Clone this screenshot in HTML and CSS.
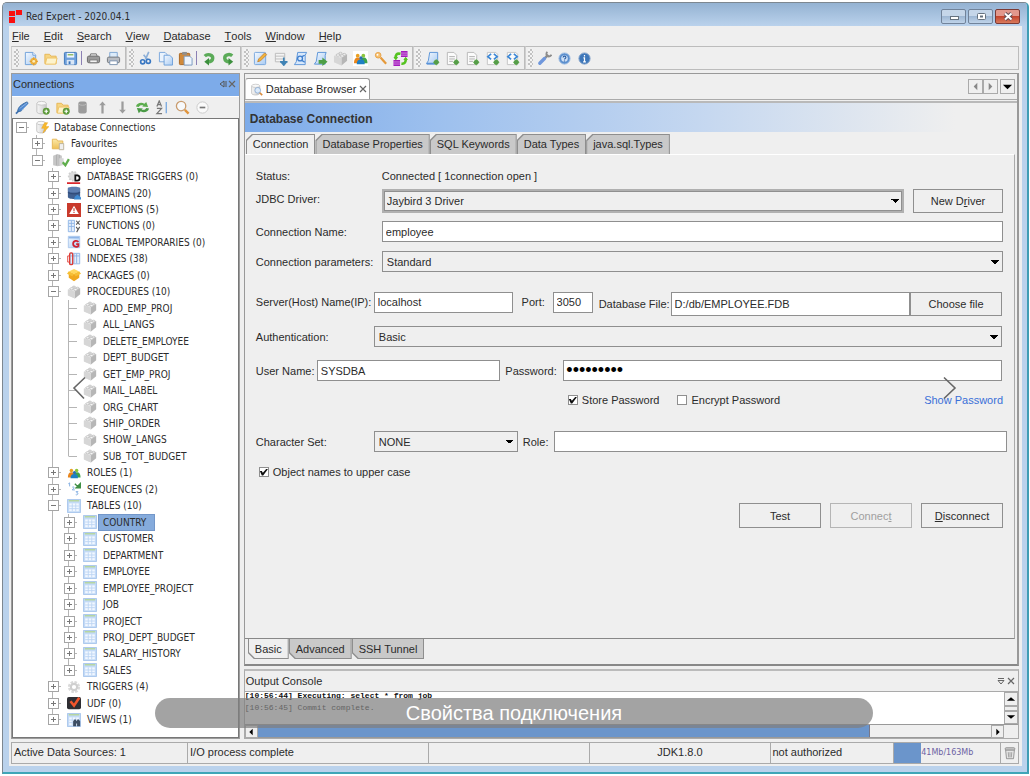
FILE: index.html
```html
<!DOCTYPE html>
<html lang="en">
<head>
<meta charset="utf-8">
<title>Red Expert - 2020.04.1</title>
<link rel="stylesheet" href="styles.css">
</head>
<body>
<svg class="defs" aria-hidden="true">
  <defs>
    <linearGradient id="gb" x1="0" y1="0" x2="1" y2="1"><stop offset="0" stop-color="#f4f9ff"/><stop offset="1" stop-color="#a9cbf2"/></linearGradient>
    <linearGradient id="gy" x1="0" y1="0" x2="0" y2="1"><stop offset="0" stop-color="#fbe9a8"/><stop offset="1" stop-color="#eebf55"/></linearGradient>
    <linearGradient id="gg" x1="0" y1="0" x2="1" y2="0"><stop offset="0" stop-color="#f8f8f8"/><stop offset="1" stop-color="#c8c8c8"/></linearGradient>
  </defs>
  <symbol id="plus" viewBox="0 0 16 16"><circle cx="12" cy="12" r="3.700" fill="#5d9a3a"/><path d="M12 10v4M10 12h4" stroke="#fff" stroke-width="1.300"/></symbol>
  <symbol id="new" viewBox="0 0 16 16"><path d="M2.500 1.500h8l3 3v10h-11z" fill="url(#gb)" stroke="#6d9fda"/><path d="M10.500 1.500v3h3" fill="#fff" stroke="#6d9fda"/><circle cx="11.500" cy="11" r="3.800" fill="#f0b440"/><path d="M11.500 6.500v9M7 11h9" stroke="#e09a2c"/><circle cx="11.500" cy="11" r="1.500" fill="#fff0b8"/></symbol>
  <symbol id="folder" viewBox="0 0 16 16"><path d="M2 3.500h5l1.500 2H14v8H2z" fill="#f6d583" stroke="#e6b654"/><path d="M4 7.500h11l-1.500 6.500H2.500z" fill="#fdf3cc" stroke="#eec265"/></symbol>
  <symbol id="save" viewBox="0 0 16 16"><rect x="1.500" y="1.500" width="13" height="13" rx="1" fill="#6fa0dc" stroke="#3d74b8"/><path d="M4 2h8v5H4z" fill="#eef5fd"/><path d="M5 4h6" stroke="#8cb860" stroke-width="1.500"/><path d="M4 9.500h8v5H4z" fill="#d9e6f5"/><path d="M6 11h2v3H6z" fill="#3d74b8"/></symbol>
  <symbol id="printd" viewBox="0 0 16 16"><path d="M4 6l1-3h6l1 3" fill="#ddd" stroke="#777"/><rect x="1.500" y="5.500" width="13" height="7" rx="1.500" fill="#9a9a9a" stroke="#666"/><path d="M4 9.500h8v3H4z" fill="#f2f2f2" stroke="#777"/></symbol>
  <symbol id="print" viewBox="0 0 16 16"><path d="M4 7V1.500h8V7" fill="#dcebfa" stroke="#7ea5d2"/><rect x="1.500" y="6.500" width="13" height="6" rx="1.500" fill="#b9bcc2" stroke="#70747b"/><path d="M4 10.500h8v4H4z" fill="#fff" stroke="#7c93b0"/></symbol>
  <symbol id="cut" viewBox="0 0 16 16"><path d="M11.500 1L8 9M6 4l4 5" stroke="#8eb0d8" stroke-width="1.800"/><circle cx="5" cy="11.500" r="2.200" fill="none" stroke="#3a78c2" stroke-width="1.800"/><circle cx="11" cy="11" r="2.200" fill="none" stroke="#3a78c2" stroke-width="1.800"/></symbol>
  <symbol id="copy" viewBox="0 0 16 16"><path d="M1.500 1.500h6l2 2v8h-8z" fill="#eaf3fd" stroke="#7ba7dc"/><path d="M6.500 4.500h6l3 3v7.500h-9z" fill="url(#gb)" stroke="#6d9fda"/></symbol>
  <symbol id="paste" viewBox="0 0 16 16"><rect x="1.500" y="2.500" width="11" height="12" rx="1" fill="#d18a3b" stroke="#a9641e"/><path d="M4.500 1h5v3h-5z" fill="#8f8f8f"/><path d="M6.500 5.500h6l2.500 2.500v7h-8.500z" fill="#eef5fd" stroke="#7899c0"/></symbol>
  <symbol id="undo" viewBox="0 0 16 16"><path d="M4 5.500C7 2.500 13 4 12.500 8c-.3 2.500-2.500 3.500-5 3.500" fill="none" stroke="#5bab58" stroke-width="3.600"/><path d="M8.500 7.500v8L3.500 11.500z" fill="#3c8f3d"/></symbol>
  <symbol id="redo" viewBox="0 0 16 16"><path d="M12 5C9 2.500 3.500 4 4 8c.3 2.500 2 3.500 5 3.500" fill="none" stroke="#5bab58" stroke-width="3.600"/><path d="M8 7.500v8l5-4z" fill="#3c8f3d"/></symbol>
  <symbol id="edit" viewBox="0 0 16 16"><rect x="1.500" y="1.500" width="12" height="13" rx="1" fill="url(#gb)" stroke="#75a5de"/><path d="M5 11.500l1-3 6.500-6.500 2 2L8 10.500z" fill="#f2b33b" stroke="#c07a23" stroke-width=".8"/></symbol>
  <symbol id="tbladd" viewBox="0 0 16 16"><path d="M2.500 2.500h10v9h-10zM2.500 5.500h10M2.500 8.500h10" fill="#f4f4f4" stroke="#bbb"/><path d="M11.500 7v8M7.500 11.500h8M9 12l2.500 3 2.500-3" fill="none" stroke="#3f83b5" stroke-width="1.800"/></symbol>
  <symbol id="scr" viewBox="0 0 16 16"><path d="M5 1.500h9.500l-1.500 3v10H1.500l2-3z" fill="#d8e8fb" stroke="#5a93d8"/><circle cx="7.500" cy="8" r="2.600" fill="none" stroke="#3f7fce" stroke-width="1.400"/><path d="M9.500 6l3-1.500M9.500 10l3 2" stroke="#3f7fce" stroke-width="1.300" fill="none"/></symbol>
  <symbol id="scrrun" viewBox="0 0 16 16"><path d="M5 1.500h9l-1 3v9.500H1.500l2-3z" fill="url(#gb)" stroke="#5a93d8"/><path d="M6 9.500h4V7l5.500 4.500L10 16v-2.500H6z" fill="#4d9f45"/></symbol>
  <symbol id="cube" viewBox="0 0 16 16"><path d="M1 5l6-4 8 2.500v7L9 15.500 1 12z" fill="#e6e6e6"/><path d="M9 7.500l6-4v7L9 15.500z" fill="#b6b6b6"/><path d="M1 5l8 2.500v8L1 12z" fill="#d6d6d6"/><g fill="#fafafa" stroke="#b5b5b5" stroke-width=".8"><ellipse cx="5.300" cy="4.300" rx="2" ry="1.200"/><ellipse cx="9.800" cy="5.300" rx="2" ry="1.200"/><ellipse cx="8" cy="2.300" rx="1.700" ry="1"/><ellipse cx="12" cy="3.500" rx="1.700" ry="1"/></g></symbol>
  <symbol id="roles" viewBox="0 0 16 16"><circle cx="5" cy="5" r="2" fill="#e9a022"/><path d="M1 13c0-4 1.500-6 4-6s4 2 4 6z" fill="#e9861c"/><circle cx="11" cy="5" r="2" fill="#8cc63c"/><path d="M8 13c0-4 1-6 3.500-6s4 2 4 6z" fill="#3fa34a"/><circle cx="8.500" cy="7.500" r="1.800" fill="#2b6fb3"/><path d="M4 14c0-3.500 1.500-5 4.500-5s4 1.500 4 5z" fill="#1d7fc4"/></symbol>
  <symbol id="key" viewBox="0 0 16 16"><path d="M8 7l6 6.500" stroke="#e59a3b" stroke-width="2.400"/><circle cx="5.500" cy="4.500" r="3" fill="#f6c070" stroke="#e8a34a"/><circle cx="4.800" cy="4" r="1" fill="#fff"/></symbol>
  <symbol id="sync" viewBox="0 0 16 16"><path d="M8.500 0h7v6.500h-7zM.5 9.500h7V16h-7z" fill="#a31bbd"/><path d="M8.500 2.200h7M8.500 4.400h7M.5 11.700h7M.5 13.900h7" stroke="#f3d4f7" stroke-width=".6"/><path d="M8 3C4 2 2.500 4 3 8M9 13.500c3.500.5 5-2 4.500-5.500" fill="none" stroke="#55c321" stroke-width="2.800"/><path d="M.5 6.500h5L3 10zM11 9.500h5L13.500 6z" fill="#55c321"/></symbol>
  <symbol id="dot" viewBox="0 0 16 16"><path d="M12 8.500l3.500 3.500-3.500 3.500L8.500 12z" fill="#6cb35b"/><circle cx="12" cy="12" r="2.500" fill="#569d49"/></symbol>
  <symbol id="blue" viewBox="0 0 16 16"><path d="M5 1.500h8.500v12H1.500l2-3z" fill="url(#gb)" stroke="#5a93d8"/><path d="M2 13.500h9" stroke="#5a93d8" stroke-width="2"/><use href="#dot"/></symbol>
  <symbol id="page" viewBox="0 0 16 16"><path d="M2.500 1.500h7l3 3v10h-10z" fill="#fbfbfb" stroke="#b8b8b8"/><path d="M4.500 6h6M4.500 8.500h6M4.500 11h4" stroke="#ababab"/><use href="#dot"/></symbol>
  <symbol id="code" viewBox="0 0 16 16"><path d="M2.500 1.500h9l2 2v11h-11z" fill="#fbfbfb" stroke="#c3c3c3"/><path d="M6.500 3L3 6l3.500 3M9.500 3L13 6 9.500 9" stroke="#3d88d6" stroke-width="1.800" fill="none"/><use href="#dot"/></symbol>
  <symbol id="wrench" viewBox="0 0 16 16"><path d="M8 8l4-4" stroke="#8c8c8c" stroke-width="2.600"/><path d="M11 .8C9.500 2.500 10 5 11 5.500s3 .5 4.500-1.500" stroke="#8c8c8c" fill="none" stroke-width="2"/><path d="M3 13L8 8" stroke="#6f97dc" stroke-width="3.600" stroke-linecap="round"/></symbol>
  <symbol id="help" viewBox="0 0 16 16"><circle cx="8" cy="8" r="6" fill="#5b8fce" stroke="#a8c2e4"/><circle cx="8" cy="8" r="3.500" fill="#cfe0f5"/><path d="M6.500 7c0-2 3-2 3 0 0 1-1.500 1-1.500 2M8 10v1.200" stroke="#2c5fa4" fill="none" stroke-width="1.200"/></symbol>
  <symbol id="info" viewBox="0 0 16 16"><circle cx="8" cy="8" r="6" fill="#3e77ba" stroke="#8aa6cc"/><path d="M8 4.200v1.600M6.800 7.300H8v4M6.500 11.500h3" stroke="#fff" fill="none" stroke-width="1.300"/></symbol>
  <symbol id="plug" viewBox="0 0 16 16"><path d="M1 14.500l3-3" stroke="#3d6fae" stroke-width="1.800"/><path d="M3 12C3 8 6 5 13 2c2 2-1 4-3 6s-3 5-7 4z" fill="#4d86cf" stroke="#35689f"/><path d="M5 9l8-6M7 11l7-7" stroke="#8fb6e6" stroke-width="1"/></symbol>
  <symbol id="db" viewBox="0 0 16 16"><path d="M2 3.500v9c0 3 10 3 10 0v-9" fill="url(#gg)" stroke="#c0c0c0"/><ellipse cx="7" cy="3.500" rx="5" ry="2" fill="#f8f8f8" stroke="#c6c6c6"/></symbol>
  <symbol id="dbadd" viewBox="0 0 16 16"><use href="#db"/><use href="#plus"/></symbol>
  <symbol id="foladd" viewBox="0 0 16 16"><use href="#folder"/><use href="#plus"/></symbol>
  <symbol id="dbg" viewBox="0 0 16 16"><rect x="3.500" y="1.500" width="9" height="13" rx="2.500" fill="#9c9c9c"/><path d="M4 4.500c2 1.500 6 1.500 8 0" stroke="#bcbcbc" fill="none"/></symbol>
  <symbol id="up" viewBox="0 0 16 16"><path d="M8 1.500l3.500 4H9.200v9H6.800v-9H4.500z" fill="#9c9c9c"/></symbol>
  <symbol id="down" viewBox="0 0 16 16"><path d="M8 14.500l3.500-4H9.200v-9H6.800v9H4.500z" fill="#9c9c9c"/></symbol>
  <symbol id="refresh" viewBox="0 0 16 16"><path d="M1 7c1-4 6-5 9-3l2-2 2 5.500-6.500-.5L9 6C7 5 5 5.500 4 7.500z" fill="#5cad4e"/><path d="M15 9c-1 4-6 5-9 3l-2 2-2-5.500 6.500.5L7 10c2 1 4 .5 5-1.500z" fill="#4b9b47"/></symbol>
  <symbol id="sort" viewBox="0 0 16 16"><path d="M2 7l2.500-6L7 7M3 5h3M2 9h5l-5 5.500h5.500" fill="none" stroke="#777" stroke-width="1.300"/><path d="M12 2v12" stroke="#6fa3df" fill="none" stroke-width="1.300"/></symbol>
  <symbol id="zoom" viewBox="0 0 16 16"><circle cx="6.500" cy="6.500" r="5" fill="#f7f9fb" stroke="#c99c6e" stroke-width="1.400"/><path d="M10.500 10.500l4 4" stroke="#e0943c" stroke-width="2.600"/></symbol>
  <symbol id="minus" viewBox="0 0 16 16"><circle cx="8" cy="8" r="6" fill="#fafafa" stroke="#c9c9c9"/><path d="M5 8h6" stroke="#777" stroke-width="1.800"/></symbol>
  <symbol id="dbfind" viewBox="0 0 16 16"><use href="#db"/><circle cx="9.500" cy="9" r="3.500" fill="#dcebfb" stroke="#86a8d0"/><path d="M12 12l3 3" stroke="#d98b3e" stroke-width="2"/></symbol>
  <symbol id="dbcon" viewBox="0 0 16 16"><use href="#db"/><path d="M11 3L7.500 9.500H11L9 15l7-7.500h-4L14.500 3z" fill="#f8b92c" stroke="#e7a01c" stroke-width=".5"/></symbol>
  <symbol id="fav" viewBox="0 0 16 16"><path d="M1.500 2.500h5l1 2h6v9h-12z" fill="url(#gy)" stroke="#e3b450"/><path d="M9.500 7.500h5v7h-5z" fill="#f0f0f0" stroke="#b9b09a"/></symbol>
  <symbol id="conn" viewBox="0 0 20 16"><path d="M1 3l5-2 5 2v11l-5 1-5-1z" fill="#c6c6c6"/><path d="M5 2v12M8 2v12" stroke="#aaa"/><path d="M8 6h5v8H8z" fill="#d6d6d6"/><path d="M12 10.500l3 3.500 4-7" stroke="#5fae4c" stroke-width="2.600" fill="none"/></symbol>
  <symbol id="dbtrig" viewBox="0 0 16 16"><circle cx="7" cy="7" r="5" fill="#dcdcdc" stroke="#cfcfcf" stroke-dasharray="2 1.500" stroke-width="2"/><path d="M0 15h15" stroke="#d8262c" stroke-width="2"/><path d="M9.500 6h2c4 0 4 6 0 6h-2z" fill="#fff" stroke="#111" stroke-width="2"/></symbol>
  <symbol id="domain" viewBox="0 0 16 16"><path d="M1 2v10.500c0 3 14 3 14 0V2z" fill="#3f5f90"/><path d="M1 3c0-3 14-3 14 0v3c-3 2-11 2-14 0z" fill="#5e7fb2"/><path d="M1 7.500c3 2 11 2 14 0" stroke="#2b4470" fill="none"/><path d="M9 12l3-2 4 3v2.500H8z" fill="#3f8ad2"/></symbol>
  <symbol id="exc" viewBox="0 0 16 16"><path d="M0 0h16v16H0z" fill="#c93a2c"/><path d="M8 3l5.500 9.500h-11z" fill="#fff"/><path d="M8 6v3.500M8 10.300v1.200" stroke="#c93a2c" stroke-width="1.300"/></symbol>
  <symbol id="func" viewBox="0 0 16 16"><path d="M1.500 1.500h7v13h-7zM5 2v12M2 5h6M2 8.500h6" fill="#e3eefb" stroke="#8bb2e5"/><path d="M10.500 2l4 4.500M14.500 2l-4 4.500M10.500 9l2 3M14.500 9l-3.500 6" stroke="#555" stroke-width="1.200"/></symbol>
  <symbol id="glob" viewBox="0 0 16 16"><path d="M1.500 1.500h13v13h-13z" fill="url(#gb)" stroke="#a8c5ea"/><path d="M2 3h12" stroke="#8fb6e8" stroke-width="2"/><path d="M13 8c-1-2-6-2-6 2s5 4 6 2.500V10.500h-2.500" fill="none" stroke="#d02030" stroke-width="2"/></symbol>
  <symbol id="index" viewBox="0 0 16 16"><path d="M3.500 1.500h11v12h-11zM8 2v11M11 2v11M4 4.500h10" fill="#e3eefb" stroke="#8bb2e5"/><rect x="3" y="1" width="3.500" height="13.500" rx="1.500" fill="none" stroke="#e03c35" stroke-width="1.500"/><path d="M3 4.500H.8v7H3" stroke="#e03c35" fill="none"/></symbol>
  <symbol id="pack" viewBox="0 0 16 16"><path d="M8 6.500l6-2.500v7L8 15 2 11V4z" fill="#f0a81f"/><path d="M8 1l6 3-6 3-6-3z" fill="#ffd75e"/><path d="M0 6.500L2 4l6 3-2 2.500zM16 6.500L14 4 8 7l2 2.500z" fill="#f6bf35"/></symbol>
  <symbol id="seq" viewBox="0 0 16 16"><path d="M1.500 2L3 1v4M6 6c2-1.500 3 .5 0 3h3M10 11h2.500l-1.500 1.500c3 0 1 3-1 2" stroke="#77a7df" fill="none"/><path d="M9 2l3 3M10.500 6.500h5v-5z" fill="#3f8f45" stroke="#3f8f45" stroke-width="1.600"/></symbol>
  <symbol id="tbl" viewBox="0 0 16 16"><path d="M.5.500h15v15H.5z" fill="#c3daf6" stroke="#a3c3ec"/><path d="M2 2h12" stroke="#b6d69c" stroke-width="1.600"/><path d="M2.500 5h11v9h-11z" fill="#f2f8ff"/><path d="M6 5v9M10 5v9M2.500 8h11M2.500 11h11" stroke="#bcd5f4"/></symbol>
  <symbol id="gear" viewBox="0 0 16 16"><circle cx="8" cy="8" r="5" fill="none" stroke="#dadada" stroke-width="4" stroke-dasharray="2.600 1.300"/><circle cx="8" cy="8" r="3.600" fill="none" stroke="#cfcfcf" stroke-width="2.400"/></symbol>
  <symbol id="udf" viewBox="0 0 16 16"><rect y="1" width="16" height="14" rx="2" fill="#2e2e33"/><path d="M4 6l4 5 6-9" stroke="#f2552c" stroke-width="3" fill="none"/></symbol>
  <symbol id="view" viewBox="0 0 16 16"><use href="#tbl"/><path d="M7 15V9.500l1.500-2h1.500l1 2 1-2h1.500l1.500 2V15h-3.500v-3h-1v3z" fill="#3c4d63"/></symbol>
  <symbol id="trash" viewBox="0 0 16 16"><path d="M3 4.500h10l-1 10H4z" fill="#e4e4e4" stroke="#8c8c8c"/><rect x="2.500" y="2" width="11" height="2.500" rx="1" fill="#ccc" stroke="#8c8c8c"/><path d="M6 7l.5 6M8 7v6M10 7l-.5 6" stroke="#9a9a9a"/></symbol>
  <symbol id="cross" viewBox="0 0 8 8"><path d="M1 1l6 6M7 1L1 7" stroke="#666" stroke-width="1.200"/></symbol>
</svg>

<div class="window">
  <header class="titlebar">
    <svg class="logo" viewBox="0 0 13 13"><path d="M0 1h6v5H0zM7 0h6v5H7zM0 7h6v6H0z" fill="#fa1010"/></svg>
    <h1>Red Expert - 2020.04.1</h1>
    <button class="wb" aria-label="Minimize"><svg viewBox="0 0 24 13"><rect x="8.500" y="6.500" width="8" height="3" fill="#fff" stroke="#66727f"/></svg></button>
    <button class="wb" aria-label="Maximize"><svg viewBox="0 0 24 13"><rect x="8.500" y="3.500" width="8" height="6" rx="1" fill="#fff" stroke="#66727f"/><rect x="11" y="5.500" width="3" height="2" fill="#66727f"/></svg></button>
    <button class="wb close" aria-label="Close"><svg viewBox="0 0 24 13"><path d="M9 3.500l6.500 6M15.500 3.500l-6.500 6" stroke="#5d4d55" stroke-width="3.800"/><path d="M9 3.500l6.500 6M15.500 3.500l-6.500 6" stroke="#fff" stroke-width="2"/></svg></button>
  </header>

  <div class="client">
    <nav class="menu">
      <button><u>F</u>ile</button><button><u>E</u>dit</button><button><u>S</u>earch</button><button><u>V</u>iew</button><button><u>D</u>atabase</button><button><u>T</u>ools</button><button><u>W</u>indow</button><button><u>H</u>elp</button>
    </nav>

    <div class="toolbars">
      <div class="bar"><i class="grip"></i>
        <button aria-label="New"><svg><use href="#new"/></svg></button><button aria-label="Open"><svg><use href="#folder"/></svg></button><button aria-label="Save"><svg><use href="#save"/></svg></button><i class="sep"></i><button aria-label="Print"><svg><use href="#printd"/></svg></button><button aria-label="Print preview"><svg><use href="#print"/></svg></button>
      </div>
      <div class="bar"><i class="grip"></i>
        <button aria-label="Cut"><svg><use href="#cut"/></svg></button><button aria-label="Copy"><svg><use href="#copy"/></svg></button><button aria-label="Paste"><svg><use href="#paste"/></svg></button><i class="sep"></i><button aria-label="Undo"><svg><use href="#undo"/></svg></button><button aria-label="Redo"><svg><use href="#redo"/></svg></button>
      </div>
      <div class="bar"><i class="grip"></i>
        <button aria-label="Query editor"><svg><use href="#edit"/></svg></button><button aria-label="Create table"><svg><use href="#tbladd"/></svg></button><button aria-label="Script"><svg><use href="#scr"/></svg></button><button aria-label="Run script"><svg><use href="#scrrun"/></svg></button><button aria-label="Procedure"><svg><use href="#cube"/></svg></button><button class="lit" aria-label="Roles"><svg><use href="#roles"/></svg></button><button aria-label="Grants"><svg><use href="#key"/></svg></button><button aria-label="Compare"><svg><use href="#sync"/></svg></button>
      </div>
      <div class="bar"><i class="grip"></i>
        <button aria-label="Export SQL"><svg><use href="#blue"/></svg></button><button aria-label="Export text"><svg><use href="#page"/></svg></button><button aria-label="Import text"><svg><use href="#page"/></svg></button><button aria-label="Export XML"><svg><use href="#code"/></svg></button><button aria-label="Import XML"><svg><use href="#code"/></svg></button>
      </div>
      <div class="bar rest"><i class="grip"></i>
        <button aria-label="Preferences"><svg><use href="#wrench"/></svg></button><button aria-label="Help"><svg><use href="#help"/></svg></button><button aria-label="About"><svg><use href="#info"/></svg></button>
      </div>
    </div>

    <div class="work">
      <aside class="side">
        <div class="sidehead"><h2>Connections</h2><button aria-label="Hide"><svg viewBox="0 0 8 8"><path d="M5 1L1 4l4 3zM7 1v6" fill="none" stroke="#555"/></svg></button><button aria-label="Close panel"><svg viewBox="0 0 8 8"><use href="#cross"/></svg></button></div>
        <div class="sidebar">
          <button aria-label="Connect"><svg><use href="#plug"/></svg></button><button aria-label="Add connection"><svg><use href="#dbadd"/></svg></button><button aria-label="Add folder"><svg><use href="#foladd"/></svg></button><button aria-label="Delete"><svg><use href="#dbg"/></svg></button><button aria-label="Move up"><svg><use href="#up"/></svg></button><button aria-label="Move down"><svg><use href="#down"/></svg></button><button aria-label="Refresh"><svg><use href="#refresh"/></svg></button><button aria-label="Sort"><svg><use href="#sort"/></svg></button><button aria-label="Find"><svg><use href="#zoom"/></svg></button><button aria-label="Collapse"><svg><use href="#minus"/></svg></button>
        </div>
        <ul class="tree">
          <li><i class="x m root"></i><svg><use href="#dbcon"/></svg><span>Database Connections</span></li>
          <li><i></i><i class="x p"></i><svg><use href="#fav"/></svg><span>Favourites</span></li>
          <li><i></i><i class="x m end"></i><svg class="wide"><use href="#conn"/></svg><span>employee</span></li>
          <li><i></i><i></i><i class="x p"></i><svg><use href="#dbtrig"/></svg><span>DATABASE TRIGGERS (0)</span></li>
          <li><i></i><i></i><i class="x p"></i><svg><use href="#domain"/></svg><span>DOMAINS (20)</span></li>
          <li><i></i><i></i><i class="x p"></i><svg><use href="#exc"/></svg><span>EXCEPTIONS (5)</span></li>
          <li><i></i><i></i><i class="x p"></i><svg><use href="#func"/></svg><span>FUNCTIONS (0)</span></li>
          <li><i></i><i></i><i class="x p"></i><svg><use href="#glob"/></svg><span>GLOBAL TEMPORARIES (0)</span></li>
          <li><i></i><i></i><i class="x p"></i><svg><use href="#index"/></svg><span>INDEXES (38)</span></li>
          <li><i></i><i></i><i class="x p"></i><svg><use href="#pack"/></svg><span>PACKAGES (0)</span></li>
          <li><i></i><i></i><i class="x m"></i><svg><use href="#cube"/></svg><span>PROCEDURES (10)</span></li>
          <li><i></i><i></i><i class="v"></i><i class="t"></i><svg><use href="#cube"/></svg><span>ADD_EMP_PROJ</span></li>
          <li><i></i><i></i><i class="v"></i><i class="t"></i><svg><use href="#cube"/></svg><span>ALL_LANGS</span></li>
          <li><i></i><i></i><i class="v"></i><i class="t"></i><svg><use href="#cube"/></svg><span>DELETE_EMPLOYEE</span></li>
          <li><i></i><i></i><i class="v"></i><i class="t"></i><svg><use href="#cube"/></svg><span>DEPT_BUDGET</span></li>
          <li><i></i><i></i><i class="v"></i><i class="t"></i><svg><use href="#cube"/></svg><span>GET_EMP_PROJ</span></li>
          <li><i></i><i></i><i class="v"></i><i class="t"></i><svg><use href="#cube"/></svg><span>MAIL_LABEL</span></li>
          <li><i></i><i></i><i class="v"></i><i class="t"></i><svg><use href="#cube"/></svg><span>ORG_CHART</span></li>
          <li><i></i><i></i><i class="v"></i><i class="t"></i><svg><use href="#cube"/></svg><span>SHIP_ORDER</span></li>
          <li><i></i><i></i><i class="v"></i><i class="t"></i><svg><use href="#cube"/></svg><span>SHOW_LANGS</span></li>
          <li><i></i><i></i><i class="v"></i><i class="t end"></i><svg><use href="#cube"/></svg><span>SUB_TOT_BUDGET</span></li>
          <li><i></i><i></i><i class="x p"></i><svg><use href="#roles"/></svg><span>ROLES (1)</span></li>
          <li><i></i><i></i><i class="x p"></i><svg><use href="#seq"/></svg><span>SEQUENCES (2)</span></li>
          <li><i></i><i></i><i class="x m"></i><svg><use href="#tbl"/></svg><span>TABLES (10)</span></li>
          <li><i></i><i></i><i class="v"></i><i class="x p"></i><svg><use href="#tbl"/></svg><span class="on">COUNTRY</span></li>
          <li><i></i><i></i><i class="v"></i><i class="x p"></i><svg><use href="#tbl"/></svg><span>CUSTOMER</span></li>
          <li><i></i><i></i><i class="v"></i><i class="x p"></i><svg><use href="#tbl"/></svg><span>DEPARTMENT</span></li>
          <li><i></i><i></i><i class="v"></i><i class="x p"></i><svg><use href="#tbl"/></svg><span>EMPLOYEE</span></li>
          <li><i></i><i></i><i class="v"></i><i class="x p"></i><svg><use href="#tbl"/></svg><span>EMPLOYEE_PROJECT</span></li>
          <li><i></i><i></i><i class="v"></i><i class="x p"></i><svg><use href="#tbl"/></svg><span>JOB</span></li>
          <li><i></i><i></i><i class="v"></i><i class="x p"></i><svg><use href="#tbl"/></svg><span>PROJECT</span></li>
          <li><i></i><i></i><i class="v"></i><i class="x p"></i><svg><use href="#tbl"/></svg><span>PROJ_DEPT_BUDGET</span></li>
          <li><i></i><i></i><i class="v"></i><i class="x p"></i><svg><use href="#tbl"/></svg><span>SALARY_HISTORY</span></li>
          <li><i></i><i></i><i class="v"></i><i class="x p end"></i><svg><use href="#tbl"/></svg><span>SALES</span></li>
          <li><i></i><i></i><i class="x p"></i><svg><use href="#gear"/></svg><span>TRIGGERS (4)</span></li>
          <li><i></i><i></i><i class="x p"></i><svg><use href="#udf"/></svg><span>UDF (0)</span></li>
          <li><i></i><i></i><i class="x p end"></i><svg><use href="#view"/></svg><span>VIEWS (1)</span></li>
        </ul>
      </aside>

      <main class="main">
        <section class="browser">
          <div class="strip">
            <div class="doctab"><svg><use href="#dbfind"/></svg><span>Database Browser</span><button aria-label="Close tab"><svg viewBox="0 0 8 8"><use href="#cross"/></svg></button></div>
            <div class="navs">
              <button aria-label="Previous tab"><svg viewBox="0 0 12 12"><path d="M8 2v8L4 6z" fill="#888"/></svg></button><button aria-label="Next tab"><svg viewBox="0 0 12 12"><path d="M4 2v8l4-4z" fill="#888"/></svg></button><button class="list" aria-label="Tab list"><svg viewBox="0 0 12 12"><path d="M1 4h10L6 9z"/></svg></button>
            </div>
          </div>
          <h2 class="banner">Database Connection</h2>
          <div class="tabs">
            <button class="tab on">Connection</button><button class="tab">Database Properties</button><button class="tab">SQL Keywords</button><button class="tab">Data Types</button><button class="tab">java.sql.Types</button>
          </div>
          <form class="form">
            <div class="row status"><span class="lab">Status:</span><span>Connected [ 1connection open ]</span></div>
            <div class="row driver"><label class="lab" for="drv">JDBC Driver:</label><select id="drv" class="grow tall focus"><option>Jaybird 3 Driver</option></select><button type="button" class="btn gap">New D<u>r</u>iver</button></div>
            <div class="row"><label class="lab" for="nm">Connection Name:</label><input id="nm" class="grow" value="employee"></div>
            <div class="row"><label class="lab" for="par">Connection parameters:</label><select id="par" class="grow"><option>Standard</option></select></div>
            <div class="row server in"><label class="lab2" for="host">Server(Host) Name(IP):</label><input id="host" class="host" value="localhost"><label class="portl" for="port">Port:</label><input id="port" class="port" value="3050"><label class="dbl" for="file">Database File:</label><input id="file" class="grow tall" value="D:/db/EMPLOYEE.FDB"><button type="button" class="btn file">Choose file</button></div>
            <div class="row in"><label class="lab2" for="auth">Authentication:</label><select id="auth" class="grow"><option>Basic</option></select></div>
            <div class="row user in"><label class="ul" for="usr">User Name:</label><input id="usr" class="usr" value="SYSDBA"><label class="pl" for="pwd">Password:</label><input id="pwd" class="grow pwd" type="password" value="masterkey"></div>
            <div class="row opts"><label><input type="checkbox" checked>Store Password</label><label><input type="checkbox">Encrypt Password</label><a href="#">Show Password</a></div>
            <div class="row charset"><label class="lab2" for="cs">Character Set:</label><select id="cs" class="cs"><option>NONE</option></select><label class="rl" for="role">Role:</label><input id="role" class="grow"></div>
            <div class="row upper"><label><input type="checkbox" checked>Object names to upper case</label></div>
            <div class="row acts"><button type="button" class="btn">Test</button><button type="button" class="btn" disabled>Connec<u>t</u></button><button type="button" class="btn"><u>D</u>isconnect</button></div>
          </form>
          <div class="tabs low">
            <button class="tab on">Basic</button><button class="tab">Advanced</button><button class="tab">SSH Tunnel</button>
          </div>
        </section>

        <section class="console">
          <div class="chead"><h2>Output Console</h2><button aria-label="Minimize console"><svg viewBox="0 0 8 8"><path d="M1 1.500h6M1 3.500h6L4 7z" fill="none" stroke="#666"/></svg></button><button aria-label="Close console"><svg viewBox="0 0 8 8"><use href="#cross"/></svg></button></div>
          <div class="cbody">
            <pre><b>[10:56:44] Executing: select * from job</b>
[10:56:45] Commit complete.</pre>
            <div class="vs"><button aria-label="Scroll up"><svg viewBox="0 0 12 12"><path d="M1 8h10L6 4z"/></svg></button><i></i><button aria-label="Scroll down"><svg viewBox="0 0 12 12"><path d="M1 4h10L6 8z"/></svg></button></div>
          </div>
          <div class="hs"><button aria-label="Scroll left"><svg viewBox="0 0 12 12"><path d="M8 2v8L4 6z"/></svg></button><div class="track"><i></i></div><button aria-label="Scroll right"><svg viewBox="0 0 12 12"><path d="M4 2v8l4-4z"/></svg></button></div>
        </section>
      </main>
    </div>

    <footer class="statusbar"><span class="s1">Active Data Sources: 1</span><span class="s2">I/O process complete</span><span class="s3"></span><span class="s4">JDK1.8.0</span><span class="s5">not authorized</span><span class="s6">41Mb/163Mb</span><button aria-label="Collect garbage"><svg><use href="#trash"/></svg></button></footer>
  </div>
</div>

<button class="arrow prev" aria-label="Previous"><svg viewBox="0 0 14 24"><path d="M13 1.500L2 12l10 10.500" fill="none" stroke="#666" stroke-width="1.600"/></svg></button>
<button class="arrow next" aria-label="Next"><svg viewBox="0 0 14 24"><path d="M1 1.500L12 12 1 22.500" fill="none" stroke="#666" stroke-width="1.600"/></svg></button>
<p class="caption" lang="ru">Свойства подключения</p>
</body>
</html>
```

FILE: styles.css
```css
* { box-sizing: border-box; }
body {
  margin: 0;
  height: 100vh;
  padding: 2px 1px 2px 2px;
  position: relative;
  overflow: hidden;
  background: #fff;
  color: #2b2b2b;
  font: 11px/14px "Liberation Sans", Arial, sans-serif;
}
.defs { position: absolute; width: 0; height: 0; }
button, input, select { font: inherit; color: inherit; margin: 0; border-radius: 0; }
button { border: 0; padding: 0; background: none; display: flex; align-items: center; justify-content: center; }
h1, h2, p, pre, ul { margin: 0; padding: 0; font-size: inherit; font-weight: normal; }
svg { display: block; flex: none; }
i { display: block; flex: none; }

.window {
  height: 100%;
  display: flex;
  flex-direction: column;
  padding: 0 5px 6px 6px;
  border: 1px solid #7d8790;
  border-right: 2px solid #3f9db4;
  border-bottom: 2px solid #3fa6b8;
  border-radius: 5px 5px 0 0;
  background: #bad2ec;
}
.titlebar {
  display: flex;
  align-items: center;
  gap: 2px;
  height: 23px;
  margin: 0 -5px 0 -6px;
  padding: 4px 7px 0 6px;
  border-radius: 4px 4px 0 0;
  background: linear-gradient(#94b2d2, #bad2ec);
}
.logo { width: 13px; height: 13px; }
.titlebar h1 { flex: 1; padding-left: 2px; font: 10px/14px "DejaVu Sans Condensed", "DejaVu Sans", sans-serif; }
.wb { width: 25px; height: 15px; border: 1px solid #71839a; border-radius: 2px; background: linear-gradient(#c5d6e9 45%, #9fb8d4 50%, #bfd3e9); }
.wb svg { width: 24px; height: 13px; }
.wb.close { background: linear-gradient(#e2988c 45%, #c4452e 50%, #d97a5c); border-color: #7b3a35; }

.client { flex: 1; min-height: 0; display: flex; flex-direction: column; background: #efefef; padding: 0 3px 2px 2px; }
.menu { display: flex; gap: 14px; height: 20px; padding-left: 1px; }
.toolbars { display: flex; height: 24px; }
.bar { display: flex; align-items: center; border: 1px solid #bcbcbc; border-left-color: #cfcfcf; padding-right: 2px; }
.bar.rest { flex: 1; }
.bar button { width: 20px; height: 20px; }
.bar svg { width: 15px; height: 15px; }
.bar .lit svg { background: #fff; }
.grip { width: 5px; height: 18px; margin: 0 1px 0 2px; background: repeating-conic-gradient(#c2c2c2 0 25%, #f4f4f4 0 50%) 0 0/4px 4px; }
.sep { width: 1px; height: 14px; margin: 0 1px; background: #8b80b4; }

.work { flex: 1; min-height: 0; display: flex; gap: 4px; padding: 3px 0; }
.side { width: 22.700%; flex: none; display: flex; flex-direction: column; border: 1px solid #9c9c9c; }
.sidehead { display: flex; align-items: center; gap: 1px; height: 22px; padding: 0 3px 2px 1px; background: #7dabe9; }
.sidehead h2 { flex: 1; }
.sidehead svg, .chead svg, .doctab button svg { width: 8px; height: 8px; }
.sidebar { display: flex; align-items: center; height: 22px; border-top: 1px solid #fff; }
.sidebar button { width: 20px; height: 20px; }
.sidebar svg { width: 15px; height: 15px; }

.tree {
  flex: 1;
  min-height: 0;
  display: grid;
  grid-auto-rows: 1fr;
  padding: 0 0 9px 0;
  border: 1px solid #777;
  background: #fff;
  list-style: none;
  font: 10px/13px "DejaVu Sans Condensed", "DejaVu Sans", sans-serif;
}
.tree li { display: flex; align-items: center; min-height: 0; white-space: pre; }
.tree i { width: 16px; height: 100%; }
.tree i.v, .tree i.t, .tree i.x {
  background:
    linear-gradient(#b5b5b5, #b5b5b5) 7px 0/1px 100% no-repeat,
    linear-gradient(#b5b5b5, #b5b5b5) 100% 50%/0 0 no-repeat;
}
.tree i.t, .tree i.x { background-size: 1px 100%, 8px 1px; }
.tree i.end { background-size: 1px 50%, 8px 1px; }
.tree i.root { background-size: 0 0, 8px 1px; }
.tree i.x { display: flex; align-items: center; padding-left: 3px; }
.tree i.x::before {
  content: "";
  width: 9px;
  height: 9px;
  border: 1px solid #a5a5a5;
  background:
    linear-gradient(#777, #777) 50% 50%/5px 1px no-repeat,
    linear-gradient(#777, #777) 50% 50%/0 0 no-repeat,
    #fff;
}
.tree i.p::before { background-size: 5px 1px, 1px 5px, auto; }
.tree svg { width: 14px; height: 14px; margin: 0 2px 0 6px; }
.tree svg.wide { width: 20px; }
.tree span { padding: 1px 4px; }
.tree li:first-child span { padding-left: 3px; }
.tree .on { background: #85abdc; outline: 1px solid #7397c9; padding: 1px 8px 1px 4px; }

.main { flex: 1; min-width: 0; display: flex; flex-direction: column; gap: 3px; }
.browser { flex: 1; min-height: 0; display: flex; flex-direction: column; border: 1px solid #999; border-right: 2px solid #999; border-bottom: 2px solid #888; }
.strip { display: flex; justify-content: space-between; align-items: flex-end; height: 26px; border-bottom: 1px solid #aaa; }
.doctab { display: flex; align-items: center; gap: 3px; height: 21px; padding: 0 2px 0 4px; border: 1px solid #999; border-bottom: 0; border-left-color: #ccc; border-radius: 3px 3px 0 0; background: #fff; }
.doctab > svg { width: 13px; height: 13px; }
.navs { display: flex; align-self: center; padding-right: 2px; }
.navs button { width: 15px; height: 15px; border: 1px solid #aaa; }
.navs svg { width: 11px; height: 11px; }
.navs .list { margin-left: 2px; }
.banner { flex: none; height: 31px; margin-top: 1px; padding: 3px 5px 0 5px; border-top: 2px solid #b9b9b9; font-size: 12px; line-height: 26px; font-weight: bold; color: #333; background: linear-gradient(90deg, #7dabe9, #9dc0ee 25%, #c6d8f0 60%, #efefef 92%); }

.tabs { display: flex; align-items: flex-end; height: 22px; padding-left: 1px; flex: none; }
.tab { position: relative; isolation: isolate; height: 20px; padding: 0 7px; background: #8e8e8e; clip-path: polygon(6px 0, 100% 0, 100% 100%, 0 100%, 0 6px); }
.tab::before { content: ""; position: absolute; z-index: -1; inset: 1px 1px 0 1px; background: #c9c9c9; clip-path: polygon(6px 0, 100% 0, 100% 100%, 0 100%, 0 6px); }
.tab.on::before { background: #efefef; }
.tabs.low { align-items: flex-start; height: 25px; padding-left: 3px; }
.low .tab { clip-path: polygon(0 0, 100% 0, 100% 100%, 6px 100%, 0 14px); }
.low .tab::before { inset: 0 1px 1px 1px; clip-path: polygon(0 0, 100% 0, 100% 100%, 6px 100%, 0 13px); }

.form { flex: 1; min-height: 0; margin: 0 2px 0 0; padding: 11px 11px 0 11px; border-right: 1px solid #aaa; border-bottom: 1px solid #888; border-top: 1px solid #fff; }
.row { display: flex; align-items: center; margin-bottom: 9px; }
.row.status { height: 20px; margin-bottom: 3px; }
.row.driver { margin-bottom: 8px; }
.driver .lab { padding-bottom: 4px; }
.lab { width: 126px; flex: none; }
.lab2 { width: 118px; flex: none; }
.row input:not([type=checkbox]), .row select { height: 21px; min-width: 0; padding: 0 4px 0 3px; border: 1px solid #8f8f8f; outline: 0; background: #fff; }
.row select { appearance: none; padding-left: 4px; background:
    linear-gradient(45deg, transparent 50%, #000 50%) calc(100% - 7px) 8px/4px 4px no-repeat,
    linear-gradient(-45deg, transparent 50%, #000 50%) calc(100% - 3px) 8px/4px 4px no-repeat,
    #efefef; }
.row .tall { height: 24px !important; }
.row select.focus { padding-left: 3px; border: 2px solid #b0b0b0; outline: 1px solid #8f8f8f; outline-offset: -3px; }
.row input.pwd { font-size: 18px; padding-left: 2px; color: #000; }
.grow { flex: 1; }
.btn { width: 90px; height: 24px; border: 1px solid #8f8f8f; background: #efefef; }
.btn.gap { margin-left: 9px; }
.btn.file { width: 92px; }
.row.in { margin-right: 1px; }
.row.server { margin-top: 20px; align-items: flex-start; line-height: 21px; }
.server .dbl { line-height: 25px; }
.host { width: 18.600%; }
.portl { width: 40px; padding-left: 9px; }
.port { width: 40px; }
.dbl { width: 78px; text-align: right; padding-right: 1px; white-space: nowrap; }
.row.user { margin-top: 13px; }
.ul { width: 61px; }
.usr { width: 24.600%; }
.pl { width: 63px; padding-left: 5px; }
.row.opts { gap: 18px; margin: 12px 0 0 312px; }
.opts a { margin-left: auto; color: #3a70d8; text-decoration: none; }
.row label:has([type=checkbox]) { display: flex; align-items: center; gap: 4px; }
[type=checkbox] { appearance: none; width: 10px; height: 10px; border: 1px solid #8f8f8f; background: #fff; display: grid; place-items: center; }
[type=checkbox]:checked::before { content: ""; width: 8px; height: 7px; background: #111; clip-path: polygon(0 35%, 25% 35%, 38% 60%, 85% 0, 100% 12%, 42% 100%, 25% 100%); }
.row.charset { margin: 24px -4px 13px 0; }
.cs { width: 144px; }
.rl { width: 36px; padding-left: 5px; }
.row.upper { margin: 0 0 0 3px; }
.row.acts { justify-content: flex-end; gap: 9px; margin-top: 24px; }
.acts .btn { width: 82px; height: 25px; }
.btn:disabled { color: #9f9f9f; border-color: #b5b5b5; }

.console { flex: none; display: flex; flex-direction: column; height: 70px; border: 1px solid #aaa; border-top: 2px solid #bbb; }
.chead { display: flex; align-items: center; gap: 2px; height: 20px; padding: 0 3px 0 1px; }
.chead h2 { flex: 1; }
.cbody { flex: 1; min-height: 0; display: flex; border-top: 1px solid #aaa; background: #fff; }
.cbody pre { flex: 1; overflow: hidden; margin-top: -2px; font: 8px/12px "Liberation Mono", "Courier New", monospace; color: #111; }
.vs { width: 14px; display: flex; flex-direction: column; background: #efefef; }
.vs button { flex: 1; border: 1px solid #aaa; }
.vs svg { width: 10px; height: 10px; }
.vs i { height: 5px; border: 1px solid #aaa; }
.hs { display: flex; height: 14px; border-top: 1px solid #999; padding-right: 14px; }
.hs button { width: 13px; border: 1px solid #aaa; }
.hs svg { width: 10px; height: 10px; }
.track { flex: 1; border-bottom: 1px solid #999; }
.track i { width: 83.500%; height: 100%; background: #6b95cb; border-right: 1px solid #778; }

.statusbar { display: flex; height: 22px; border: 1px solid #aaa; line-height: 19px; }
.statusbar span { padding: 0 2px; border-right: 1px solid #aaa; white-space: nowrap; }
.s1 { width: 17.500%; }
.s2 { width: 24%; }
.s3 { width: 16%; }
.s4 { width: 17.900%; text-align: center; }
.s5 { width: 12.300%; }
.statusbar .s6 { flex: 1; padding-left: 27px; font: 8px/20px "DejaVu Sans", sans-serif; color: #6c62a3; background: linear-gradient(#6b95cb, #6b95cb) 0 0/27px 100% no-repeat; }
.statusbar button { width: 17px; }
.statusbar svg { width: 14px; height: 14px; }

.arrow { position: absolute; top: 50%; transform: translateY(-50%); width: 14px; height: 24px; }
.arrow svg { width: 14px; height: 24px; }
.prev { left: 7%; }
.next { right: 7.100%; }
.caption { position: absolute; left: 15%; right: 15.200%; bottom: 48px; height: 30px; border-radius: 15px; background: rgba(128, 128, 128, .72); color: #fff; text-align: center; font-size: 20px; line-height: 30px; }
```
